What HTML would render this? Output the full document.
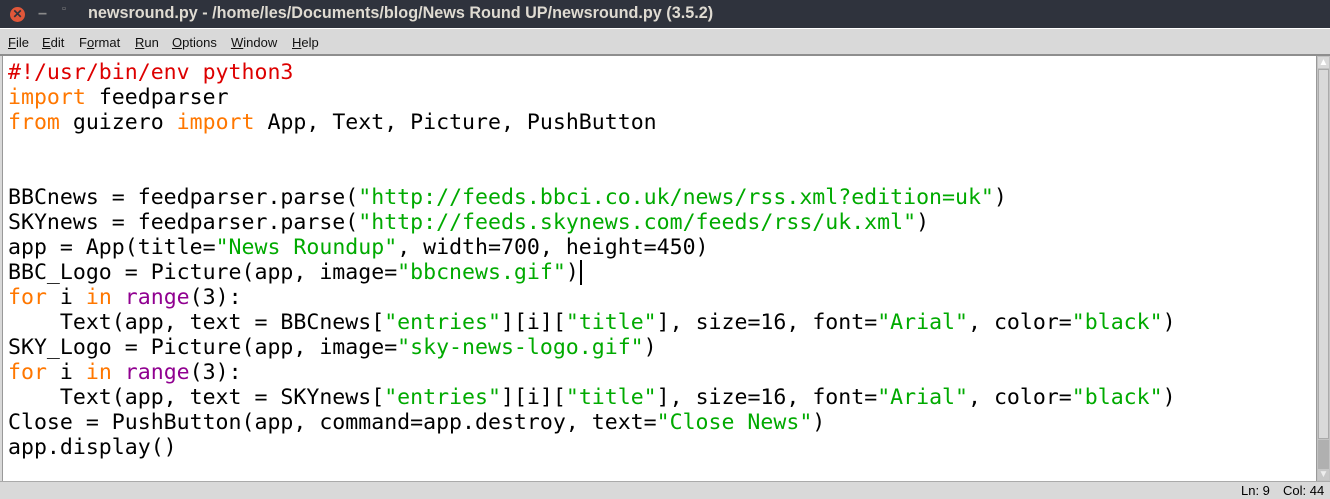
<!DOCTYPE html>
<html><head><meta charset="utf-8"><style>
*{margin:0;padding:0;box-sizing:border-box}
body{width:1330px;height:499px;overflow:hidden;background:#d9d9d9;font-family:"Liberation Sans",sans-serif;position:relative}
#title{position:absolute;left:0;top:0;width:1330px;height:28px;background:#2f333d;color:#dfdbd2;font-weight:bold;font-size:16.2px}
#title .t{position:absolute;left:88px;top:4px}
#close{position:absolute;left:10px;top:7px;width:15px;height:15px;border-radius:50%;background:#e0573a;color:#2f333d;font-size:12px;line-height:15px;text-align:center}
#menu{position:absolute;left:0;top:28px;width:1330px;height:28px;background:#d9d9d9;border-top:1px solid #fff;border-bottom:2px solid #8e8e8e;font-size:13px;color:#111}
#menu span{position:absolute;top:6px}
#menu u{text-decoration:underline}
#ed{position:absolute;left:2px;top:56px;width:1314px;height:425px;background:#fff;border-left:1px solid #999}
pre{position:absolute;left:5px;top:4px;font-family:"DejaVu Sans Mono",monospace;font-size:21.55px;line-height:25px;color:#000}
.r{color:#dd0000}.o{color:#ff7700}.g{color:#00aa00}.p{color:#900090}
#sb{position:absolute;left:1316px;top:56px;width:14px;height:425px;background:#c3c3c3;border-left:1px solid #999}
#thumb{position:absolute;left:1px;top:13px;width:11px;height:370px;background:#d9d9d9;border:1px solid #aaa}
#trough{position:absolute;left:1px;top:384px;width:11px;height:30px;background:#b0b0b0}
#status{position:absolute;left:0;top:481px;width:1330px;height:18px;background:#d9d9d9;border-top:1px solid #aaa;font-size:13px}
#status span{position:absolute;top:1px}
</style></head><body>
<div id="title"><div id="close">✕</div><span style="position:absolute;left:38px;top:4px;color:#8a8a8a">–</span><span style="position:absolute;left:62px;top:3px;color:#8a8a8a;font-size:11px">▫</span><span class="t">newsround.py - /home/les/Documents/blog/News Round UP/newsround.py (3.5.2)</span></div>
<div id="menu"><span style="left:8px"><u>F</u>ile</span><span style="left:42px"><u>E</u>dit</span><span style="left:79px">F<u>o</u>rmat</span><span style="left:135px"><u>R</u>un</span><span style="left:172px"><u>O</u>ptions</span><span style="left:231px"><u>W</u>indow</span><span style="left:292px"><u>H</u>elp</span></div>
<div id="ed"><pre><span class="r">#!/usr/bin/env python3</span>
<span class="o">import</span> feedparser
<span class="o">from</span> guizero <span class="o">import</span> App, Text, Picture, PushButton


BBCnews = feedparser.parse(<span class="g">"http://feeds.bbci.co.uk/news/rss.xml?edition=uk"</span>)
SKYnews = feedparser.parse(<span class="g">"http://feeds.skynews.com/feeds/rss/uk.xml"</span>)
app = App(title=<span class="g">"News Roundup"</span>, width=700, height=450)
BBC_Logo = Picture(app, image=<span class="g">"bbcnews.gif"</span>)<span style="border-left:2px solid #000;margin-left:1px"></span>
<span class="o">for</span> i <span class="o">in</span> <span class="p">range</span>(3):
    Text(app, text = BBCnews[<span class="g">"entries"</span>][i][<span class="g">"title"</span>], size=16, font=<span class="g">"Arial"</span>, color=<span class="g">"black"</span>)
SKY_Logo = Picture(app, image=<span class="g">"sky-news-logo.gif"</span>)
<span class="o">for</span> i <span class="o">in</span> <span class="p">range</span>(3):
    Text(app, text = SKYnews[<span class="g">"entries"</span>][i][<span class="g">"title"</span>], size=16, font=<span class="g">"Arial"</span>, color=<span class="g">"black"</span>)
Close = PushButton(app, command=app.destroy, text=<span class="g">"Close News"</span>)
app.display()</pre></div>
<div id="sb"><div style="position:absolute;left:1px;top:1px;width:11px;height:11px;background:#d9d9d9;color:#fff;font-size:10px;text-align:center;line-height:11px">▲</div><div id="thumb"></div><div id="trough"></div><div style="position:absolute;left:1px;top:413px;width:11px;height:11px;background:#c8c8c8;color:#eee;font-size:10px;text-align:center;line-height:11px">▼</div></div>
<div id="status"><span style="left:1241px">Ln: 9</span><span style="left:1283px">Col: 44</span></div>
</body></html>
